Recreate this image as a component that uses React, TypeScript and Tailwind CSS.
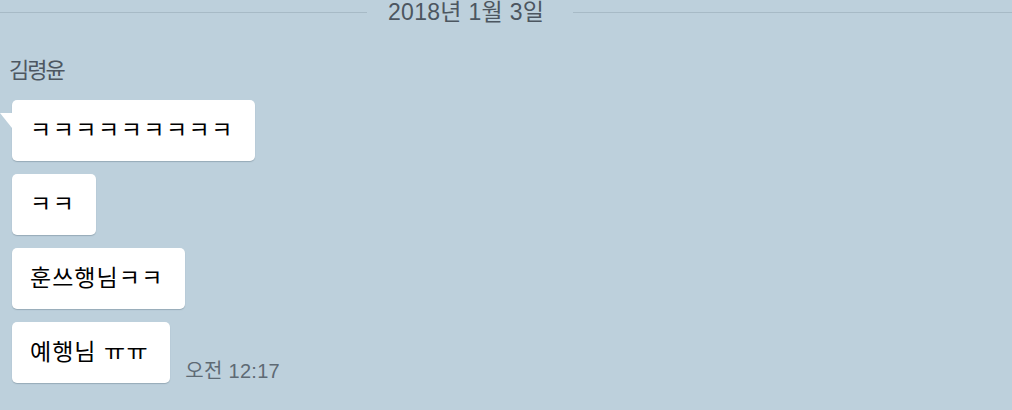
const messages = ["ㅋㅋㅋㅋㅋㅋㅋㅋㅋ", "ㅋㅋ", "훈쓰행님ㅋㅋ"];

// loose jamo (ㅋ, ㅠ) sit wider apart than full syllables
function splitJamo(text: string) {
  return text.split(/([\u3131-\u318e]+)/).map((part, i) =>
    /[\u3131-\u318e]/.test(part) ? (
      <span key={i} className="tracking-[1.5px]">
        {part}
      </span>
    ) : (
      <span key={i} className="tracking-[1px]">
        {part}
      </span>
    )
  );
}

function Bubble({ text, tail = false }: { text: string; tail?: boolean }) {
  return (
    <div className="relative w-fit">
      {tail && (
        <div className="absolute -left-[12px] top-[13px] h-0 w-0 border-t-[15px] border-l-[12px] border-t-white border-l-transparent" />
      )}
      <div className="rounded-[5px] bg-white py-[16px] pl-[18px] pr-[21px] text-[23px] leading-[29px] text-black shadow-[0_1px_1px_rgba(80,100,115,0.35)]">
        {splitJamo(text)}
      </div>
    </div>
  );
}

export default function App() {
  return (
    <div
      className="h-[410px] w-[1012px] overflow-hidden bg-[#bdd0dc]"
      style={{ fontFamily: '"Liberation Sans", "Noto Sans CJK KR", sans-serif' }}
    >
      {/* Date divider */}
      <div className="-mt-[2px] flex h-[28px] items-center">
        <div className="h-px w-[367px] bg-[#a7bac6]" />
        <span className="pl-[21px] pr-[29px] text-[23px] leading-[28px] tracking-[0.3px] text-[#4c5660]">
          2018년 1월 3일
        </span>
        <div className="h-px flex-1 bg-[#a7bac6]" />
      </div>

      {/* Sender */}
      <div className="mt-[31px] pl-[9px] text-[22px] leading-[28px] tracking-[-2px] text-[#4d5761]">
        김령윤
      </div>

      {/* Messages */}
      <div className="mt-[15px] flex flex-col gap-[13px] pl-[12px]">
        {messages.map((m, i) => (
          <Bubble key={i} text={m} tail={i === 0} />
        ))}
        <div className="flex items-end gap-[15px]">
          <Bubble text="예행님 ㅠㅠ" />
          <span className="text-[20px] leading-[24px] tracking-[0.3px] text-[#5e6a74]">오전 12:17</span>
        </div>
      </div>
    </div>
  );
}
